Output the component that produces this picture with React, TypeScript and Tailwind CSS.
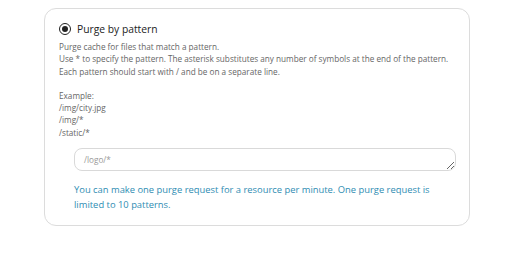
export default function App() {
  return (
    <div className="w-[508px] h-[256px] bg-white pt-[8px] pl-[44px] font-['Open_Sans',sans-serif]">
      <div className="w-[426px] h-[218px] rounded-[12px] border border-[#dcdcdc] px-[14px] pt-[13px]">
        <div className="flex items-center gap-[6px]">
          <span className="flex h-[12px] w-[12px] items-center justify-center rounded-full border border-[#222]">
            <span className="h-[6px] w-[6px] rounded-full bg-[#222]" />
          </span>
          <span className="text-[10.3px] leading-[14px] text-[#222]">Purge by pattern</span>
        </div>
        <div className="mt-[5px] text-[8.2px] leading-[12.3px] text-[#666]">
          <p>Purge cache for files that match a pattern.</p>
          <p>Use * to specify the pattern. The asterisk substitutes any number of symbols at the end of the pattern.</p>
          <p>Each pattern should start with / and be on a separate line.</p>
          <p className="mt-[12px]">Example:</p>
          <p>/img/city.jpg</p>
          <p>/img/*</p>
          <p>/static/*</p>
        </div>
        <div className="ml-[15px] mr-[-1px]">
          <textarea
            rows={1}
            placeholder="/logo/*"
            className="mt-[9px] block h-[23px] w-full resize-y rounded-[8px] border border-[#d9d9d9] px-[9px] py-[5px] text-[8.2px] leading-[12px] text-[#333] placeholder:text-[#999] outline-none"
          />
          <p className="mt-[11px] text-[9.4px] leading-[15px] text-[#2f8db3]">
            You can make one purge request for a resource per minute. One purge request is limited to 10 patterns.
          </p>
        </div>
      </div>
    </div>
  );
}
